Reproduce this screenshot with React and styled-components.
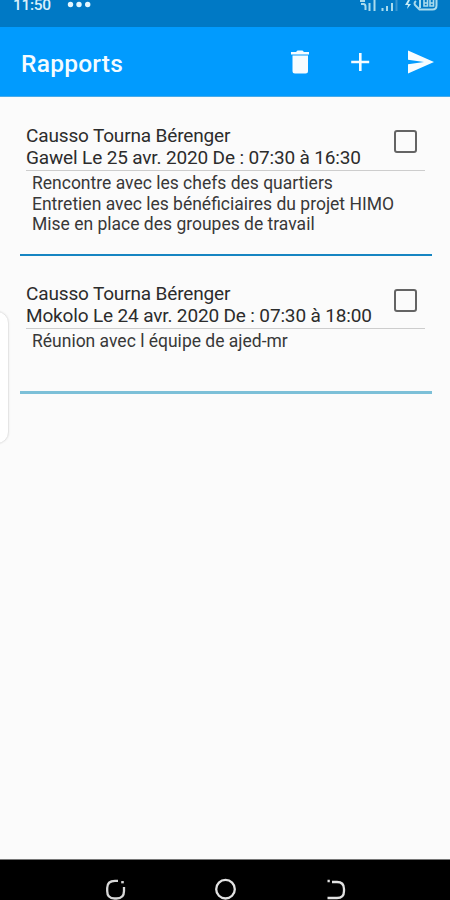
import React from 'react';
import styled, { createGlobalStyle } from 'styled-components';

const GlobalStyle = createGlobalStyle`
  *, *::before, *::after { box-sizing: border-box; }
  body { margin: 0; background: #fbfbfb; font-family: Roboto, "Liberation Sans", sans-serif; }
`;

const Screen = styled.div`
  position: relative;
  width: 450px;
  height: 900px;
  overflow: hidden;
  display: flex;
  flex-direction: column;
  background: #fbfbfb;
  color: #2c2c2c;
`;

const StatusBar = styled.header`
  flex: none;
  height: 27px;
  padding: 0 11px 0 13px;
  display: flex;
  justify-content: space-between;
  align-items: flex-start;
  background: #0079c5;
  color: #d9f0fb;
`;

const StatusGroup = styled.div`
  display: flex;
  align-items: flex-start;
`;

const Clock = styled.span`
  width: 54px;
  font-size: 15.5px;
  line-height: 10px;
  font-weight: 500;
  letter-spacing: -0.3px;
`;

const AppBar = styled.div`
  flex: none;
  height: 70px;
  padding: 1px 15px 0 21px;
  display: flex;
  align-items: center;
  background: #019bfe;
  border-bottom: 1px solid #48abe9;
  color: #f4fbff;
`;

const Title = styled.h1`
  flex: 1;
  margin: 3px 0 0;
  font-size: 24.5px;
  line-height: 30px;
  font-weight: 500;
  letter-spacing: 0.25px;
`;

const Actions = styled.div`
  display: flex;
  gap: 30px;
`;

const IconButton = styled.button`
  width: 30px;
  height: 30px;
  padding: 0;
  border: 0;
  background: none;
  color: #f6fcff;
  display: grid;
  place-items: center;
`;

const List = styled.main`
  flex: 1;
  padding: 0 18px 0 20px;
`;

const Report = styled.article`
  height: ${(p) => p.$height}px;
  padding: ${(p) => p.$top}px 7px 0 6px;
  border-bottom: ${(p) => p.$rule};
`;

const ReportHead = styled.div`
  display: flex;
  justify-content: space-between;
  border-bottom: 1px solid #cdcdcd;
  padding-bottom: 1px;
`;

const HeadLine = styled.div`
  font-size: 19px;
  line-height: 22px;
  letter-spacing: -0.15px;
  white-space: nowrap;
`;

const Check = styled.span`
  flex: none;
  width: 23px;
  height: 23px;
  margin: ${(p) => p.$offset}px 8px 0 0;
  border: 2px solid #646464;
  border-radius: 3px;
`;

const Notes = styled.div`
  padding: 2px 0 0 6px;
`;

const Note = styled.div`
  font-size: 17.5px;
  line-height: 20.5px;
  white-space: nowrap;
  color: #383838;
`;

const SideHandle = styled.div`
  position: absolute;
  left: -20px;
  top: 311px;
  width: 29px;
  height: 133px;
  border: 1px solid #e5e5e5;
  border-radius: 12px;
  background: #fff;
  box-shadow: 0 0 2px #e9e9e9;
`;

const NavBar = styled.nav`
  flex: none;
  height: 41px;
  padding: 17px 103px 0 104px;
  border-top: 1px solid #777;
  display: flex;
  justify-content: space-between;
  background: #000;
`;

const reports = [
  {
    name: 'Causso Tourna Bérenger',
    when: 'Gawel Le 25 avr. 2020 De : 07:30 à 16:30',
    notes: [
      'Rencontre avec les chefs des quartiers',
      'Entretien avec les bénéficiaires du projet HIMO',
      'Mise en place des groupes de travail',
    ],
    height: 159, top: 28, checkOffset: 5, rule: '2px solid #1685c2',
  },
  {
    name: 'Causso Tourna Bérenger',
    when: 'Mokolo Le 24 avr. 2020 De : 07:30 à 18:00',
    notes: ['Réunion avec l équipe de ajed-mr'],
    height: 138, top: 27, checkOffset: 6, rule: '3px solid #7cc0d8',
  },
];

const Dots = () => (
  <svg width="24" height="10" viewBox="0 0 24 10" fill="#e4f7ff">
    <circle cx="3.5" cy="4.5" r="2.7" /><circle cx="12" cy="4.5" r="2.7" /><circle cx="20.7" cy="4.5" r="2.7" />
  </svg>
);

const StatusIcons = () => (
  <svg width="80" height="13" viewBox="0 0 80 13" fill="none" stroke="#a9dbed" strokeWidth="2">
    <path d="M1 1h5M2 4h2.500q2 0 2 2.500V10M10.500 3v8M15.500 0v11" />
    <path d="M23.500 8v3M28 6v5M33 3v8" />
    <path d="M37.500 0v11" stroke="#3996d0" />
    <path d="M49 0l-3 5h3l-1 4 4-5h-3l2-4z" fill="#c6edf7" stroke="none" />
    <path d="M57 1q-3 2.500 0 5l3.500 3.500h13q4 0 4-4V0" />
    <path d="M61 0v8" />
    <path d="M65 0v6h3.500V0M65 3h3.500M71 0v6h3.500V0M71 3h3.500" strokeWidth="1.600" />
  </svg>
);

export default function App() {
  return (
    <>
      <GlobalStyle />
      <Screen>
        <StatusBar>
          <StatusGroup><Clock>11:50</Clock><Dots /></StatusGroup>
          <StatusIcons />
        </StatusBar>
        <AppBar>
          <Title>Rapports</Title>
          <Actions>
            <IconButton aria-label="Supprimer">
              <svg width="30" height="30" viewBox="0 0 30 30" fill="currentColor">
                <path d="M6 5h5l1.500-1.500h5L19 5h5v2.500H6zM7.500 8.500h15.500v15.500a2.500 2.500 0 0 1-2.500 2.500H10A2.500 2.500 0 0 1 7.500 24z" />
              </svg>
            </IconButton>
            <IconButton aria-label="Ajouter">
              <svg width="30" height="30" viewBox="0 0 30 30" stroke="currentColor" strokeWidth="2.600">
                <path d="M6.200 15h18M15.300 6v18" />
              </svg>
            </IconButton>
            <IconButton aria-label="Envoyer">
              <svg width="30" height="30" viewBox="0 0 30 30" fill="currentColor">
                <path d="M3 3.500l26 11.500L3 26.500v-9.200L19 15 3 12.700z" />
              </svg>
            </IconButton>
          </Actions>
        </AppBar>
        <List>
          {reports.map((r) => (
            <Report key={r.when} $height={r.height} $top={r.top} $rule={r.rule}>
              <ReportHead>
                <div>
                  <HeadLine>{r.name}</HeadLine>
                  <HeadLine>{r.when}</HeadLine>
                </div>
                <Check role="checkbox" aria-checked="false" $offset={r.checkOffset} />
              </ReportHead>
              <Notes>
                {r.notes.map((n) => <Note key={n}>{n}</Note>)}
              </Notes>
            </Report>
          ))}
        </List>
        <NavBar>
          <svg width="23" height="23" viewBox="0 0 23 23" fill="none" stroke="#d8d8d8" strokeWidth="2.300">
            <path d="M14 3.800h-3Q3.200 3.800 3.200 11v3q0 7.500 7.300 7.500h2q7.500 0 7.500-7.500v-4" />
            <path d="M17.200 5.200h2.600" />
          </svg>
          <svg width="23" height="23" viewBox="0 0 23 23" fill="none" stroke="#e2e2e2" strokeWidth="2.300">
            <circle cx="11.500" cy="12.200" r="9.300" />
          </svg>
          <svg width="23" height="23" viewBox="0 0 23 23" fill="none" stroke="#e2e2e2" strokeWidth="2.300">
            <path d="M3.500 4h2.300M8 5h5q7 0 7 7v2q0 7-7 7H3.500" />
          </svg>
        </NavBar>
        <SideHandle />
      </Screen>
    </>
  );
}
